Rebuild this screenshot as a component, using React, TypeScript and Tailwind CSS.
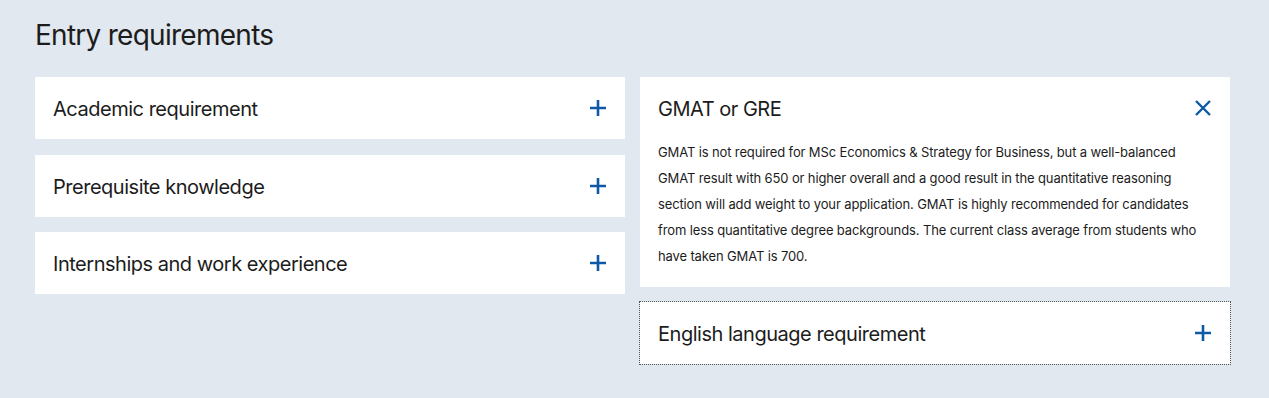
const BLUE = "text-[#0c5aa6]";

function PlusIcon() {
  return (
    <svg viewBox="0 0 18 18" className={`h-[18px] w-[18px] ${BLUE}`} fill="none" stroke="currentColor" strokeWidth={2.6}>
      <path d="M9 1v16M1 9h16" />
    </svg>
  );
}

function CloseIcon() {
  return (
    <svg viewBox="0 0 18 18" className={`h-[18px] w-[18px] ${BLUE}`} fill="none" stroke="currentColor" strokeWidth={2.4}>
      <path d="M2 2l14 14M16 2L2 16" />
    </svg>
  );
}

function Item({ title, focused }: { title: string; focused?: boolean }) {
  return (
    <div
      className={`flex h-[62px] items-center justify-between bg-white px-[18px] ${
        focused ? "outline outline-1 outline-dotted outline-[#555]" : ""
      }`}
    >
      <span className="pt-[2px] text-[20px] tracking-[-0.024em] text-[#1c1c1c]">{title}</span>
      <PlusIcon />
    </div>
  );
}

export default function App() {
  return (
    <div
      className="min-h-[398px] bg-[#e1e8f0] px-[35px] pt-[17px]"
      style={{ fontFamily: "Inter, 'Liberation Sans', sans-serif" }}
    >
      <h1 className="text-[28px] leading-[36px] tracking-[-0.026em] text-[#1c1c1c]">Entry requirements</h1>
      <div className="mt-[24px] grid w-[1195px] grid-cols-2 gap-[15px]">
        <div className="flex flex-col gap-[15.5px]">
          <Item title="Academic requirement" />
          <Item title="Prerequisite knowledge" />
          <Item title="Internships and work experience" />
        </div>
        <div className="flex flex-col gap-[15px]">
          <div className="bg-white">
            <div className="flex h-[62px] items-center justify-between px-[18px]">
              <span className="pt-[2px] text-[20px] tracking-[-0.024em] text-[#1c1c1c]">GMAT or GRE</span>
              <CloseIcon />
            </div>
            <p className="px-[18px] pb-[18px] text-[13px] leading-[26px] tracking-[-0.01em] text-[#1c1c1c]">
              GMAT is not required for MSc Economics &amp; Strategy for Business, but a well-balanced GMAT result with 650 or
              higher overall and a good result in the quantitative reasoning section will add weight to your application.
              GMAT is highly recommended for candidates from less quantitative degree backgrounds. The current class
              average from students who have taken GMAT is 700.
            </p>
          </div>
          <Item title="English language requirement" focused />
        </div>
      </div>
    </div>
  );
}
